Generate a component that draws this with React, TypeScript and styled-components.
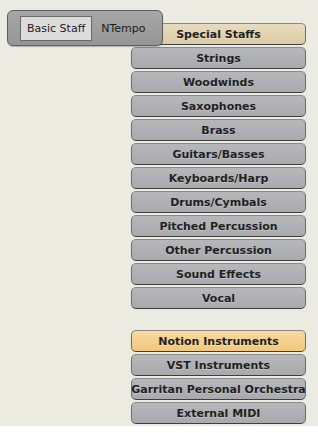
import styled, { createGlobalStyle } from "styled-components";

const GlobalStyle = createGlobalStyle`
  body {
    margin: 0;
    background: #ffffff;
    font-family: "DejaVu Sans", Verdana, sans-serif;
  }
`;

const Panel = styled.div`
  position: relative;
  width: 318px;
  height: 426px;
  background: #ecebe2;
  overflow: hidden;
`;

const TabBar = styled.div`
  position: absolute;
  left: 7px;
  top: 10px;
  width: 156px;
  height: 36px;
  box-sizing: border-box;
  display: flex;
  align-items: center;
  gap: 9px;
  padding: 0 0 0 12px;
  border: 1px solid #5e5e5e;
  border-radius: 6px;
  background: linear-gradient(#a6a6a6, #959595);
  box-shadow: 0 1px 1px rgba(0, 0, 0, 0.25);
  z-index: 2;
`;

const Tab = styled.div<{ $active?: boolean }>`
  height: 25px;
  box-sizing: border-box;
  display: flex;
  align-items: center;
  padding: 0 ${(p) => (p.$active ? "6px" : "0")};
  font-size: 11px;
  color: #1c1c1c;
  background: ${(p) => (p.$active ? "#dcdcdc" : "transparent")};
  border: ${(p) => (p.$active ? "1px solid #6a6a6a" : "none")};
`;

const Column = styled.div`
  display: flex;
  flex-direction: column;
  width: 175px;
  margin-left: 131px;
  padding-top: 23px;
`;

const Group = styled.div`
  display: flex;
  flex-direction: column;
  gap: 2px;
  & + & {
    margin-top: 21px;
  }
`;

type Tone = "grey" | "tan" | "orange";

const tones: Record<Tone, string> = {
  grey: "linear-gradient(#b6b7ba, #a9aaad)",
  tan: "linear-gradient(#e8dcc0, #dccaa3)",
  orange: "linear-gradient(#f8d9a0, #f1c77e)",
};

const Button = styled.div<{ $tone: Tone }>`
  height: 22px;
  box-sizing: border-box;
  display: flex;
  align-items: center;
  justify-content: center;
  white-space: nowrap;
  overflow: hidden;
  font-size: 11px;
  font-weight: bold;
  color: #1f1f1f;
  background: ${(p) => tones[p.$tone]};
  border: 1px solid #6c6c6c;
  border-top-color: #8a8a8a;
  border-bottom-color: #3e3e3e;
  border-radius: 5px;
  text-shadow: 0 1px 0 rgba(255, 255, 255, 0.25);
`;

const staffs = [
  "Strings",
  "Woodwinds",
  "Saxophones",
  "Brass",
  "Guitars/Basses",
  "Keyboards/Harp",
  "Drums/Cymbals",
  "Pitched Percussion",
  "Other Percussion",
  "Sound Effects",
  "Vocal",
];

const sources = ["VST Instruments", "Garritan Personal Orchestra", "External MIDI"];

export default function App() {
  return (
    <>
      <GlobalStyle />
      <Panel>
        <TabBar>
          <Tab $active>Basic Staff</Tab>
          <Tab>NTempo</Tab>
        </TabBar>
        <Column>
          <Group>
            <Button $tone="tan">Special Staffs</Button>
            {staffs.map((s) => (
              <Button key={s} $tone="grey">
                {s}
              </Button>
            ))}
          </Group>
          <Group>
            <Button $tone="orange">Notion Instruments</Button>
            {sources.map((s) => (
              <Button key={s} $tone="grey">
                {s}
              </Button>
            ))}
          </Group>
        </Column>
      </Panel>
    </>
  );
}
